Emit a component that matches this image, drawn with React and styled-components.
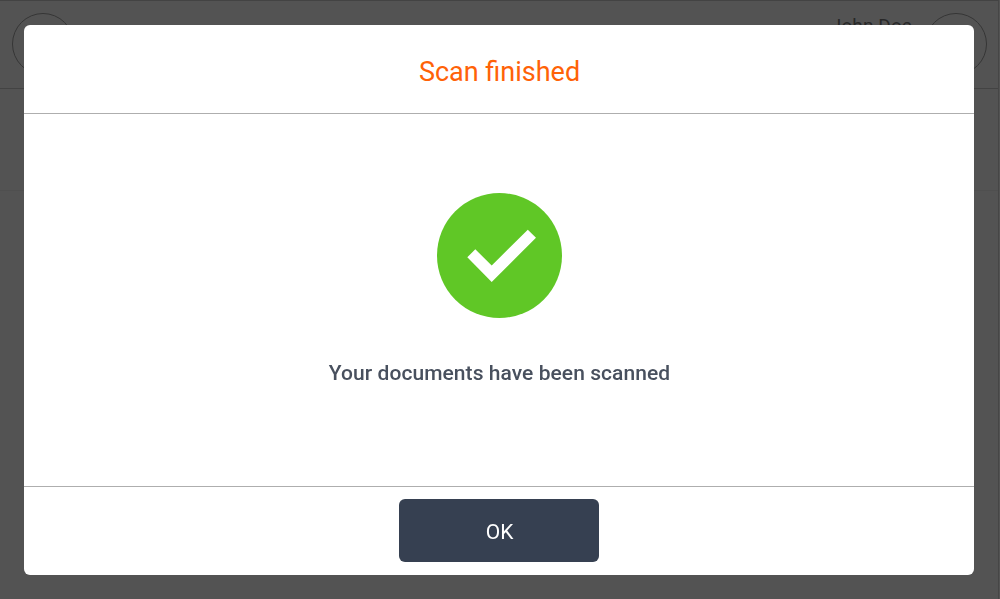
import styled, { createGlobalStyle } from 'styled-components';

const GlobalStyle = createGlobalStyle`
* {
  box-sizing: border-box;
}

body {
  margin: 0;
  overflow: hidden;
  font-family: Roboto, 'Liberation Sans', sans-serif;
}
`;

const Page = styled('div')`
width: 999px;
height: 599px;
background-color: #fff;
border-top: 1px solid #cfcfcf;
border-right: 1px solid #d8d8d8;
`;

const TopBar = styled('header')`
display: flex;
align-items: flex-start;
justify-content: space-between;
height: 88px;
padding: 12px 11px 0 12px;
border-bottom: 1px solid #cfcfcf;
`;

const SubBar = styled('div')`
height: 102px;
border-bottom: 1px solid #f2f2f2;
`;

const RoundButton = styled('div')`
width: 62px;
height: 62px;
border: 1px solid #a2a2a2;
border-radius: 50%;
`;

const Account = styled('div')`
display: flex;
gap: 13px;
`;

const UserName = styled('span')`
padding-top: 1px;
color: #7c7c7c;
font-size: 19px;
letter-spacing: 0.1px;
line-height: 23px;
`;

const Overlay = styled('div')`
position: fixed;
top: 0;
left: 0;
display: flex;
width: 1000px;
height: 599px;
padding: 25px 26px 24px 24px;
background-color: rgba(0, 0, 0, 0.675);
`;

const Modal = styled('div')`
display: flex;
flex: 1;
flex-direction: column;
border-radius: 6px;
background-color: #fff;
`;

const ModalHeader = styled('div')`
height: 89px;
padding-left: 1px;
border-bottom: 1px solid #aeaeae;
color: #ff6207;
font-size: 27px;
line-height: 95px;
text-align: center;
`;

const ModalBody = styled('div')`
display: flex;
flex: 1;
flex-direction: column;
align-items: center;
padding-top: 79px;
`;

const Message = styled('div')`
margin-top: 40px;
padding-left: 1px;
color: #48505e;
font-size: 21px;
font-weight: 500;
letter-spacing: 0.06px;
line-height: 30px;
`;

const ModalFooter = styled('div')`
display: flex;
justify-content: center;
height: 89px;
padding-top: 12px;
border-top: 1px solid #aeaeae;
`;

const Button = styled('button')`
width: 200px;
height: 63px;
padding: 2px 0 0 1px;
border: 0;
border-radius: 6px;
background-color: #364051;
color: #fff;
font-family: inherit;
font-size: 21px;
`;

function SuccessIcon() {
  return (
    <svg width="125" height="125" viewBox="0 0 125 125">
      <circle cx="62.5" cy="62.5" r="62.5" fill="#60c726" />
      <path d="M30.3 64.3l8-8 16.4 16.2 36.1-35.8 8.2 8L54.7 89z" fill="#fff" />
    </svg>
  );
}

function App() {
  return (
    <>
      <GlobalStyle />
      <Page>
        <TopBar>
          <RoundButton />
          <Account>
            <UserName>John Doe</UserName>
            <RoundButton />
          </Account>
        </TopBar>
        <SubBar />
      </Page>
      <Overlay>
        <Modal>
          <ModalHeader>Scan finished</ModalHeader>
          <ModalBody>
            <SuccessIcon />
            <Message>Your documents have been scanned</Message>
          </ModalBody>
          <ModalFooter>
            <Button>OK</Button>
          </ModalFooter>
        </Modal>
      </Overlay>
    </>
  );
}

export default App;
